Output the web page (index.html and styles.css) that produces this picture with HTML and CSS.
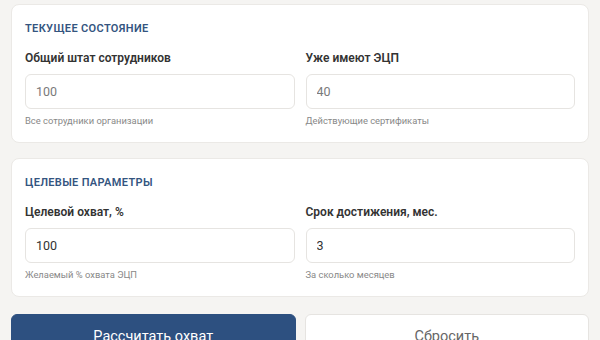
FILE: index.html
```html
<!DOCTYPE html>
<html lang="ru">

<head>
    <meta charset="UTF-8">
    <meta name="viewport" content="width=device-width, initial-scale=1.0">
    <link rel="stylesheet" href="styles.css">
    <title>Расчёт охвата ЭЦП</title>
</head>

<body>
    <div class="page">
        <section class="card">
            <h2 class="card-title">Текущее состояние</h2>
            <div class="fields">
                <div class="field">
                    <label for="staff">Общий штат сотрудников</label>
                    <input type="number" id="staff" placeholder="100">
                    <span class="hint">Все сотрудники организации</span>
                </div>
                <div class="field">
                    <label for="have">Уже имеют ЭЦП</label>
                    <input type="number" id="have" placeholder="40">
                    <span class="hint">Действующие сертификаты</span>
                </div>
            </div>
        </section>

        <section class="card">
            <h2 class="card-title">Целевые параметры</h2>
            <div class="fields">
                <div class="field">
                    <label for="target">Целевой охват, %</label>
                    <input type="number" id="target" value="100">
                    <span class="hint">Желаемый % охвата ЭЦП</span>
                </div>
                <div class="field">
                    <label for="months">Срок достижения, мес.</label>
                    <input type="number" id="months" value="3">
                    <span class="hint">За сколько месяцев</span>
                </div>
            </div>
        </section>

        <div class="actions">
            <button type="button" class="btn btn-primary">Рассчитать охват</button>
            <button type="button" class="btn btn-secondary">Сбросить</button>
        </div>
    </div>
</body>

</html>
```

FILE: styles.css
```css
body {
    margin: 0;
    background: #f5f4f2;
    font-family: Roboto, "Noto Sans", sans-serif;
    color: #333;
}

.page {
    padding: 4px 11px;
    display: flex;
    flex-direction: column;
    gap: 15px;
}

.card {
    background: #fff;
    border: 1px solid #ebe9e6;
    border-radius: 8px;
    padding: 15px 13px 13px;
}

.card-title {
    margin: 0 0 11px;
    font-size: 11px;
    line-height: 18px;
    font-weight: 600;
    text-transform: uppercase;
    letter-spacing: 0.35px;
    color: #34557f;
}

.fields {
    display: grid;
    grid-template-columns: 1fr 1fr;
    gap: 11px;
}

.field {
    display: flex;
    flex-direction: column;
}

label {
    font-size: 12px;
    line-height: 18px;
    font-weight: 600;
    color: #333;
    margin-bottom: 7px;
}

input {
    height: 35px;
    box-sizing: border-box;
    border: 1px solid #e6e4e1;
    border-radius: 6px;
    padding: 0 10px;
    font-family: inherit;
    font-size: 12.5px;
    color: #333;
    background: #fff;
    -moz-appearance: textfield;
}

input::-webkit-outer-spin-button,
input::-webkit-inner-spin-button {
    -webkit-appearance: none;
    margin: 0;
}

input::placeholder {
    color: #7a7a7a;
}

.hint {
    margin-top: 4px;
    font-size: 9.4px;
    line-height: 16px;
    color: #888;
}

.actions {
    display: grid;
    grid-template-columns: 1fr 1fr;
    gap: 9px;
    margin-top: 2px;
}

/* button content is centred vertically by the browser */
.btn {
    height: 46px;
    border-radius: 6px;
    font-family: inherit;
    font-size: 14.5px;
    line-height: 20px;
    padding: 0;
    text-align: center;
    cursor: pointer;
}

.btn-primary {
    background: #2d5080;
    color: #fff;
    border: 1px solid #2d5080;
}

.btn-secondary {
    background: #fff;
    color: #666;
    border: 1px solid #e6e4e1;
}
```
